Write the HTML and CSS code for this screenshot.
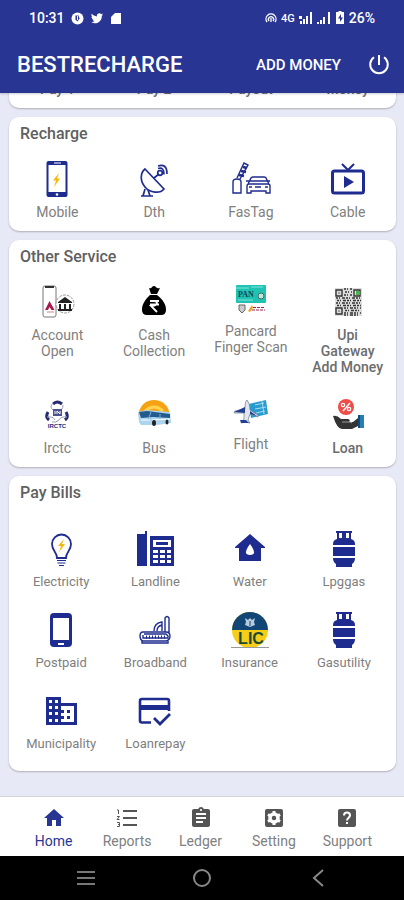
FILE: index.html
```
<!DOCTYPE html>
<html lang="en">
<head>
  <meta charset="UTF-8" />
  <title>BESTRECHARGE</title>
  <meta name="viewport" content="width=device-width, initial-scale=1.0" />
  <link rel="stylesheet" href="styles.css">
</head>
<body>

  <header class="app-header">
    <div class="status-bar">
      <div class="status-group">
        <span>10:31</span>
        <svg width="13" height="13" viewBox="0 0 13 13"><circle cx="6.500" cy="6.500" r="6" fill="#fff"/><path d="M4.500 3.500h3l1 3-2 3-2-2z" fill="#283593"/><path d="M6.500 4v4" stroke="#fff"/></svg>
        <svg width="14" height="14" viewBox="0 0 24 24"><path fill="#fff" d="M22.460 6c-.77.35-1.600.58-2.460.69.88-.53 1.560-1.370 1.880-2.380-.83.5-1.750.85-2.720 1.050C18.370 4.500 17.260 4 16 4c-2.350 0-4.270 1.920-4.270 4.290 0 .34.04.67.11.98C8.280 9.090 5.110 7.380 3 4.790c-.37.63-.58 1.370-.58 2.150 0 1.490.75 2.810 1.910 3.560-.71 0-1.370-.2-1.950-.5v.03c0 2.080 1.480 3.820 3.440 4.210a4.220 4.220 0 0 1-1.930.07 4.280 4.280 0 0 0 4 2.980 8.521 8.521 0 0 1-5.330 1.840c-.34 0-.68-.02-1.020-.06C3.440 20.290 5.700 21 8.120 21 16 21 20.330 14.460 20.330 8.790c0-.19 0-.37-.01-.56.84-.6 1.560-1.360 2.140-2.230z"/></svg>
        <svg width="12" height="13" viewBox="0 0 12 13"><path fill="#fff" d="M5 1h6v11H1V5z"/></svg>
      </div>
      <div class="status-group status-right">
        <svg width="12" height="12" viewBox="0 0 12 12" fill="none" stroke="#fff" stroke-width="1.300"><path d="M2 10A5 5 0 1 1 10 10M4 9a2.600 2.600 0 1 1 4 0M6 6v4"/></svg>
        <span class="network">4G</span>
        <svg width="14" height="12" viewBox="0 0 14 12"><path fill="#fff" d="M0 4h3v3H0zM1 9h2v3H1zM4 7h2v5H4zM7 4h2v8H7zM11 0h2v12h-2z"/></svg>
        <svg width="14" height="12" viewBox="0 0 14 12"><path fill="#fff" d="M0 10h2v2H0zM3 8h2v4H3zM6 5h2v7H6zM11 0h2v12h-2z"/></svg>
        <svg width="10" height="14" viewBox="0 0 10 14"><path d="M3.500 0h3v1H9v12H1V1h2.500z" fill="#fff"/><path d="M6 3L3 7.500h2V11l3-4.500H6z" fill="#283593"/></svg>
        <span>26%</span>
      </div>
    </div>
    <div class="title-bar">
      <h1>BESTRECHARGE</h1>
      <button class="add-money" type="button">ADD MONEY</button>
      <button class="power" type="button" aria-label="Log out">
        <svg width="24" height="24" viewBox="0 0 24 24" fill="none" stroke="#fff" stroke-width="2"><path d="M12 2v10M7 4.200a8.800 8.800 0 1 0 10 0"/></svg>
      </button>
    </div>
  </header>

  <main>
    <section class="card">
      <div class="grid">
        <a class="item strong" href="#">Pay 1</a>
        <a class="item strong" href="#">Pay 2</a>
        <a class="item strong" href="#">Payout</a>
        <a class="item strong" href="#">Money</a>
      </div>
    </section>

    <section class="card">
      <h2>Recharge</h2>
      <div class="grid">
        <a class="item" href="#">
          <svg class="icon" viewBox="0 0 36 36"><rect x="7.500" y="0" width="21" height="36" rx="2" fill="#1f2c8f"/><path d="M9.500 4h17v27h-17z" fill="#fff"/><path d="M15 2h7" stroke="#fff"/><circle cx="18" cy="33.500" r="1.300" fill="#fff"/><path d="M20 12l-6 7.500h3L15 26l6-8.500h-3z" fill="#f5b80c"/></svg>
          Mobile
        </a>
        <a class="item" href="#">
          <svg class="icon" viewBox="0 0 36 36" fill="none" stroke="#1f2c8f" stroke-width="1.700"><path d="M9 8L28 28C24 33 14 32 9 26S4 12 9 8zM18 17l5-4M9 28l-2 7M12 29l2 6M5 35h12"/><circle cx="24" cy="12" r="2.300"/><path d="M22 7.500q6-2 6 6M22 5q9-3 9 8" /></svg>
          Dth
        </a>
        <a class="item" href="#">
          <svg class="icon wide" viewBox="0 0 40 36" fill="none" stroke="#1f2c8f" stroke-width="1.400"><path d="M2 32V21q0-3 4-3t4 3v11zM6 17L13 2l4 2-8 14"/><path d="M8 14l5 1M10 10l5 1M12 6l4 1" stroke-width="2.500"/><path d="M17 23l3-6q1-1 2-1h11q2 0 2 1l3 6M15 20h3M37 20h2M16 32v-7q0-2 2-2h19q2 0 2 2v7h-4v-2H20v2zM18 26h3M34 26h3M24 26h6M19 20h17"/></svg>
          FasTag
        </a>
        <a class="item" href="#">
          <svg class="icon" viewBox="0 0 36 36"><rect x="2.500" y="10" width="31" height="22" rx="2" fill="none" stroke="#1f2c8f" stroke-width="3"/><path d="M12 3l6 6 6-6" fill="none" stroke="#1f2c8f" stroke-width="2"/><path d="M14 15v12l10-6z" fill="#1f2c8f"/></svg>
          Cable
        </a>
      </div>
    </section>

    <section class="card">
      <h2>Other Service</h2>
      <div class="grid">
        <a class="item" href="#">
          <svg class="icon" viewBox="0 0 36 36"><rect x="4" y="2" width="13" height="31" rx="2" fill="#fff" stroke="#777"/><path d="M6 3h9" stroke="#333" stroke-width="2"/><path d="M10.500 17L6 26h3l1.500-3 2 3h3z" fill="#a8194c"/><path d="M8 28h7" stroke="#c88"/><circle cx="26" cy="20" r="9" fill="#fff" stroke="#999" stroke-dasharray="3 1"/><path d="M19 18l7-5 7 5v1H19zM20 20h2v5h-2zM25 20h2v5h-2zM30 20h2v5h-2zM19 25h14v2H19z" fill="#222"/></svg>
          Account Open
        </a>
        <a class="item" href="#">
          <svg class="icon" viewBox="0 0 36 36"><path d="M13 4q2 1 3-1 2-2 4 0 1 2 4 1l-3 6h-6zM14 11h7c6 5 9 9 9 15q0 5-5 5H11q-5 0-5-5c0-6 3-10 8-15z" fill="#000"/><path d="M14 17h9M14 20.500h9M14 17h3q4 0 4 2t-4 3h-2l6 6" fill="none" stroke="#fff" stroke-width="1.800"/></svg>
          Cash Collection
        </a>
        <a class="item" href="#">
          <svg class="icon short" viewBox="0 0 36 32"><rect x="3" y="1" width="30" height="18" rx="1" fill="#20c2b2"/><path d="M3 4h13M18 3h12M5 16h15" stroke="#80e5dc"/><circle cx="28" cy="12" r="3" fill="#bce7dc" stroke="#466"/><text x="5" y="13" class="pan-text">PAN</text><path d="M6 21h6v5l-3 3-3-3z" fill="#ccc" stroke="#666"/><path d="M15 27l4-6 1 3-3 4z" fill="#e9a11a"/><path d="M20 23.500h12M19 26h13" stroke="#925" stroke-dasharray="3 1"/></svg>
          Pancard Finger Scan
        </a>
        <a class="item strong" href="#">
          <svg class="icon" viewBox="0 0 36 36"><path d="M5 4h27v28H5z" fill="#ddd"/><g fill="none" stroke="#333" stroke-width="1.400"><path d="M6 6h6v6H6zM24 6h6v6h-6zM6 24h6v6H6zM8.500 9h1M27 9h1M8.500 27h1"/><path stroke-dasharray="2 1 1 2 3 1" d="M14 5h8M15 8h7M14 11h8M6 14h25M7 16.500h24M6 19h25M7 21.500h24M14 24h17M15 26.500h15M14 29h17M14 31h16"/></g><path d="M26 7h4v4h-4z" fill="#43b649"/></svg>
          Upi Gateway Add Money
        </a>
        <a class="item" href="#">
          <svg class="icon" viewBox="0 0 36 36" fill="none"><path d="M14 7q4-4 9 0M9 15q-3 5 1 8M27 15q3 5-1 8" stroke="#262a70" stroke-width="3"/><path d="M14 6q-4 4 0 7M24 8q0 6-5 5M8 20q6-1 8 3M28 20q-6-1-8 3q-3 3-7 2" stroke="#9a9dbb"/><path d="M14 12h9v7h-9z" fill="#4d5191"/><path d="M16 14v3M18 17v-3l3 3v-3" stroke="#fff"/><text x="18" y="31" class="irctc-text">IRCTC</text></svg>
          Irctc
        </a>
        <a class="item" href="#">
          <svg class="icon" viewBox="0 0 36 36"><path d="M2 18C4 8 10 3 18 3s15 5 16 16z" fill="#f6a313"/><path d="M9 14q9-8 18 0" stroke="#ffd34e" stroke-width="3" fill="none"/><path d="M2 15l8-2 24 2 1 11-14 2H5l-2-3z" fill="#abd4ef"/><path d="M3 15l8-1 23 3v4l-17-1-12 1z" fill="#245b8e"/><path d="M15 15l-3 8M24 17v5" stroke="#7bb6e0"/><path d="M5 23h9M16 23l18-1" stroke="#fff"/><ellipse cx="18" cy="26" rx="2" ry="3" fill="#222"/><ellipse cx="31" cy="25" rx="1.500" ry="2.500" fill="#222"/></svg>
          Bus
        </a>
        <a class="item" href="#">
          <svg class="icon short" viewBox="0 0 36 32"><path d="M16 7l17-4 2 14-17 4z" fill="#279bd0"/><path d="M22 8l9-2M22 12l11-2M23 16l9-2M29 4l2 13" stroke="#a9ddf3"/><path d="M14 3q3 3 3 10l8 5v2l-8-3-2 6 2 3-5-1-4 1 3-4v-6L1 16l1-2 10-2q0-8 2-9z" fill="#e1e7ec" stroke="#65798a" stroke-width=".7"/><path d="M1 15l11-5v6zM17 14l7 5-7-2zM7 23h6l3 3H8z" fill="#243f94"/></svg>
          Flight
        </a>
        <a class="item strong" href="#">
          <svg class="icon" viewBox="0 0 36 36"><circle cx="16" cy="10" r="8" fill="#ee4d49"/><path d="M13 14l7-8" stroke="#fff" stroke-width="1.500"/><g fill="none" stroke="#fff" stroke-width="1.200"><circle cx="13" cy="8" r="1.700"/><circle cx="19" cy="12" r="1.700"/></g><path d="M3 19q4-1 8 3h7q3 1 1 3h4l5-4v8l-6 3H12q-5 0-9-13z" fill="#333"/><path d="M12 25h8l2 1" stroke="#999" fill="none"/><path d="M28 18h6v13h-6z" fill="#267eb5"/><path d="M28 18h2v13h-2z" fill="#164a76"/></svg>
          Loan
        </a>
      </div>
    </section>

    <section class="card bills">
      <h2>Pay Bills</h2>
      <div class="grid">
        <a class="item" href="#">
          <svg class="icon" viewBox="0 0 36 36"><path d="M14 27c0-6-5-7-5-14a9.500 9.500 0 0 1 19 0c0 7-5 8-5 14z" fill="none" stroke="#1f2c8f" stroke-width="1.800"/><path d="M14 29.500h9M14.500 32h8M16 34.500h5" stroke="#1f2c8f" stroke-width="1.200"/><path d="M21 8l-6 7h3l-2 6 6-8h-3z" fill="#f5b80c"/></svg>
          Electricity
        </a>
        <a class="item" href="#">
          <svg class="icon wide" viewBox="0 0 40 36"><path d="M2 3h8V0h2v35H2zM15 5h24v30H15z" fill="#1f2c8f"/><path d="M18 9h18v7H18z" fill="#fff"/><path d="M21 11h12v3H21z" fill="#1f2c8f"/><path d="M18 19h5v3h-5zM25 19h5v3h-5zM32 19h4v3h-4zM18 24h5v3h-5zM25 24h5v3h-5zM32 24h4v3h-4zM18 29h5v3h-5zM25 29h5v3h-5zM32 29h4v3h-4z" fill="#fff"/></svg>
          Landline
        </a>
        <a class="item" href="#">
          <svg class="icon" viewBox="0 0 36 36"><path d="M18 3L3 16v1h4v13h22V17h4v-1z" fill="#1f2c8f"/><path d="M18 13q-8 11 0 11 8 0 0-11z" fill="#fff"/></svg>
          Water
        </a>
        <a class="item" href="#">
          <svg class="icon" viewBox="0 0 36 36"><use href="#cylinder"/></svg>
          Lpggas
        </a>
        <a class="item" href="#">
          <svg class="icon" viewBox="0 0 36 36"><rect x="7" y="1" width="22" height="34" rx="4" fill="#1f2c8f"/><path d="M10 6h16v22H10z" fill="#fff"/><path d="M15 32h6" stroke="#fff" stroke-width="2"/></svg>
          Postpaid
        </a>
        <a class="item" href="#">
          <svg class="icon" viewBox="0 0 36 36" fill="none" stroke="#1f2c8f" stroke-width="1.400"><path d="M6 20h23q4 0 4 4t-4 5H6q-3-1-3-5t3-4zM28 20V6q2-3 4 0v16M17 19q0-8 8-9v9M20 19q0-5 5-6"/><path d="M7 22h22l2 2v2H6v-3M5 29v2h26v-2"/><path d="M9 25h20" stroke-width="3" stroke-dasharray="1 2"/></svg>
          Broadband
        </a>
        <a class="item" href="#">
          <svg class="icon wide" viewBox="0 0 40 36"><circle cx="20" cy="18" r="18" fill="#f5ce17"/><path d="M2 18a18 18 0 0 1 36 0z" fill="#124677"/><path d="M15 13l1-3-1-4 3 2 2-2 2 2 3-2-1 4 1 3-5 2z" fill="#b8cbdc"/><path d="M20 9v5" stroke="#124677"/><text x="21" y="32" class="lic-text">LIC</text><path d="M1 35.500h38" stroke="#999"/></svg>
          Insurance
        </a>
        <a class="item" href="#">
          <svg class="icon" viewBox="0 0 36 36"><use href="#cylinder"/></svg>
          Gasutility
        </a>
        <a class="item" href="#">
          <svg class="icon" viewBox="0 0 36 36"><path d="M3 4h15v6h16v22H3z" fill="#1f2c8f"/><path d="M6 7h3v3H6zM12 7h3v3h-3zM6 13h3v3H6zM12 13h3v3h-3zM6 19h3v3H6zM12 19h3v3h-3zM6 26h3v3H6zM12 26h3v3h-3zM18 13h13v16H18v-3h3v-3h-3v-3h3v-3h-3z" fill="#fff"/><path d="M24 17h3v3h-3zM24 23h3v3h-3z" fill="#1f2c8f"/></svg>
          Municipality
        </a>
        <a class="item" href="#">
          <svg class="icon" viewBox="0 0 36 36" fill="none" stroke="#1f2c8f"><path d="M14 29.500H5q-2 0-2-2V8q0-2 2-2h25q2 0 2 2v10" stroke-width="2.600"/><path d="M3 14.500h29" stroke-width="5"/><path d="M17 25l6 6 10-10" stroke-width="2.800"/></svg>
          Loanrepay
        </a>
      </div>
    </section>
  </main>

  <nav class="tab-bar">
    <a class="tab active" href="#">
      <svg width="24" height="24" viewBox="0 0 24 24"><path fill="currentColor" d="M10 20v-6h4v6h5v-8h3L12 3 2 12h3v8z"/></svg>
      Home
    </a>
    <a class="tab" href="#">
      <svg width="24" height="24" viewBox="0 0 24 24"><path d="M8 5h14M8 12h14M8 19h14" stroke="#555" stroke-width="2"/><path d="M2 4h1.500v4M2 10.500h2.500L2 13.500h2.500M2 16.500h2.500v4H2M3 18.500h1.500" fill="none" stroke="#555"/></svg>
      Reports
    </a>
    <a class="tab" href="#">
      <svg width="24" height="24" viewBox="0 0 24 24"><path fill="#555" d="M19 3h-4.180C14.400 1.840 13.300 1 12 1s-2.400.84-2.820 2H5c-1.100 0-2 .9-2 2v14c0 1.100.9 2 2 2h14c1.100 0 2-.9 2-2V5c0-1.100-.9-2-2-2zm-7 0c.55 0 1 .45 1 1s-.45 1-1 1-1-.45-1-1 .45-1 1-1zm2 14H7v-2h7v2zm3-4H7v-2h10v2zm0-4H7V7h10v2z"/></svg>
      Ledger
    </a>
    <a class="tab" href="#">
      <svg width="24" height="24" viewBox="0 0 24 24"><rect x="3" y="3" width="18" height="18" rx="2" fill="#555"/><circle cx="12" cy="12" r="4" fill="none" stroke="#fff" stroke-width="3.500"/><path d="M12 5v3M12 16v3M6 8.500l2.500 1.500M15.500 14l2.500 1.500M6 15.500L8.500 14M15.500 10L18 8.500" stroke="#fff" stroke-width="3"/></svg>
      Setting
    </a>
    <a class="tab" href="#">
      <svg width="24" height="24" viewBox="0 0 24 24"><rect x="3" y="3" width="18" height="18" rx="2" fill="#555"/><path d="M9 9.500q0-3 3-3t3 3c0 2-3 2.500-3 5M12 16v2" fill="none" stroke="#fff" stroke-width="2"/></svg>
      Support
    </a>
  </nav>

  <footer class="system-bar">
    <button type="button" aria-label="Recent apps"><svg width="20" height="20" viewBox="0 0 20 20"><path d="M1 4h18M1 10h18M1 16h18" stroke="#777" stroke-width="2"/></svg></button>
    <button type="button" aria-label="Home screen"><svg width="20" height="20" viewBox="0 0 20 20"><circle cx="10" cy="10" r="8" fill="none" stroke="#888" stroke-width="2"/></svg></button>
    <button type="button" aria-label="Back"><svg width="20" height="20" viewBox="0 0 20 20"><path d="M15 2l-9 8 9 8" fill="none" stroke="#888" stroke-width="2"/></svg></button>
  </footer>

  <!-- gas cylinder, shared by Lpggas and Gasutility -->
  <svg class="symbols" aria-hidden="true">
    <symbol id="cylinder" viewBox="0 0 36 36"><path d="M10 0h16v2h-1v6q4 1 4 5v1H7v-1q0-4 4-5V2h-1zM7 16h22v9H7zM7 27h22q0 4-3 6v3H10v-3q-3-2-3-6z" fill="#1f2c8f"/><path d="M13 2h3v5h-3zM20 2h3v5h-3z" fill="#fff"/></symbol>
  </svg>

</body>
</html>
```
FILE: styles.css
```
* {
  box-sizing: border-box;
}

body {
  font-family: Roboto, Arial, sans-serif;
  margin: 0;
  height: 100vh;
  display: flex;
  flex-direction: column;
  background: #e8e9f6;
  color: #808080;
  overflow: hidden;
}

h1,
h2 {
  margin: 0;
  font-weight: 500;
}

a {
  color: inherit;
  text-decoration: none;
}

button {
  font: inherit;
  color: inherit;
  background: none;
  border: none;
  padding: 0;
  cursor: pointer;
}

svg {
  display: block;
  flex: none;
}

.app-header {
  flex: none;
  background: #283593;
  color: #fff;
  box-shadow: 0 1px 2px rgba(0, 0, 0, 0.2);
  z-index: 1;
}

.status-bar {
  display: flex;
  justify-content: space-between;
  align-items: center;
  height: 36px;
  padding: 0 29px;
  font-size: 14px;
  font-weight: 500;
}

.status-group {
  display: flex;
  align-items: center;
  gap: 6px;
}

.status-right {
  gap: 4px;
}

.network {
  font-size: 11px;
}

.title-bar {
  display: flex;
  align-items: center;
  height: 57px;
  padding: 0 13px 0 17px;
}

h1 {
  flex: 1;
  font-size: 22px;
  line-height: 28px;
}

.add-money {
  font-size: 15px;
  font-weight: 500;
}

.power {
  margin-left: 26px;
}

main {
  flex: 1;
  min-height: 0;
  display: flex;
  flex-direction: column;
  justify-content: flex-end;
  gap: 9px;
  padding: 0 8px 25px 9px;
  overflow: hidden;
}

.card {
  flex: none;
  background: #fff;
  border-radius: 10px;
  padding: 8px 0 11px;
  box-shadow: 0 1px 2px rgba(0, 0, 0, 0.25);
}

h2 {
  font-size: 16px;
  line-height: 18px;
  color: #606060;
  padding: 0 11px;
}

.grid {
  display: grid;
  grid-template-columns: repeat(4, 1fr);
  row-gap: 22px;
  padding-top: 18px;
}

.bills .grid {
  padding: 29px 5px 8px;
}

.item {
  display: flex;
  flex-direction: column;
  align-items: center;
  gap: 7px;
  padding: 0 10px;
  font-size: 14px;
  line-height: 16px;
  text-align: center;
}

.bills .item {
  padding: 0;
  font-size: 13px;
}

.strong {
  font-weight: 500;
  color: #6c6c6c;
}

.icon {
  width: 36px;
  height: 36px;
}

.icon.wide {
  width: 40px;
}

.icon.short {
  height: 32px;
}

.pan-text {
  font: bold 8px "Liberation Serif", serif;
  fill: #145;
}

.irctc-text {
  font: bold 6px "Liberation Sans", sans-serif;
  fill: #262a70;
  text-anchor: middle;
}

.lic-text {
  font: bold 16px "Liberation Sans", sans-serif;
  fill: #1b4b35;
  text-anchor: middle;
}

.tab-bar {
  flex: none;
  display: flex;
  height: 60px;
  padding: 9px 20px 0 17px;
  background: #fff;
  border-top: 1px solid #d5d5dc;
}

.tab {
  flex: 1;
  display: flex;
  flex-direction: column;
  align-items: center;
  gap: 3px;
  font-size: 14px;
  line-height: 16px;
}

.tab.active {
  color: #283593;
}

.system-bar {
  flex: none;
  display: flex;
  height: 44px;
  padding: 0 28px;
  background: #000;
}

.system-bar button {
  flex: 1;
  display: flex;
  justify-content: center;
  align-items: center;
}

.symbols {
  display: none;
}
```
